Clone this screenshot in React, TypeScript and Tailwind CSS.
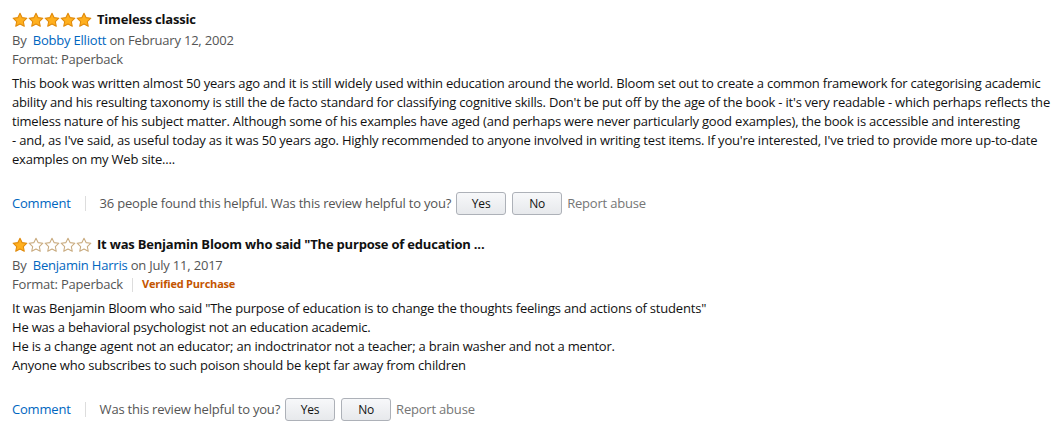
import React from 'react';

type Review = {
  rating: number;
  title: string;
  author: string;
  date: string;
  verified: boolean;
  body: React.ReactNode[];
  helpful?: string;
};

const reviews: Review[] = [
  {
    rating: 5,
    title: 'Timeless classic',
    author: 'Bobby Elliott',
    date: 'February 12, 2002',
    verified: false,
    body: [
      <>
        This book was written almost 50 years ago and it is still widely used within education around the world. Bloom set out to create a common framework for categorising academic ability and his resulting taxonomy is still the de facto standard for classifying cognitive skills. Don't be put off by the age of the book - it's very readable - which perhaps reflects the timeless nature of his subject matter. Although some of his examples have aged (and perhaps were never particularly good examples), the book is accessible and interesting{' '}
        <span className="whitespace-nowrap">- and,</span> as I've said, as useful today as it was 50 years ago. Highly recommended to anyone involved in writing test items. If you're interested, I've tried to provide more up-to-date examples on my Web site....
      </>,
    ],
    helpful: '36 people found this helpful.',
  },
  {
    rating: 1,
    title: 'It was Benjamin Bloom who said "The purpose of education ...',
    author: 'Benjamin Harris',
    date: 'July 11, 2017',
    verified: true,
    body: [
      'It was Benjamin Bloom who said "The purpose of education is to change the thoughts feelings and actions of students"',
      'He was a behavioral psychologist not an education academic.',
      'He is a change agent not an educator; an indoctrinator not a teacher; a brain washer and not a mentor.',
      'Anyone who subscribes to such poison should be kept far away from children',
    ],
  },
];

function Star({ filled }: { filled: boolean }) {
  return (
    <svg width="16" height="16" viewBox="0 0 24 24">
      <path
        d="M12 1.8l3.1 6.6 7.2.9-5.3 5 1.4 7.1L12 17.9l-6.4 3.5L7 14.3l-5.3-5 7.2-.9z"
        fill={filled ? '#ffb01f' : '#ffffff'}
        stroke={filled ? '#e08a0b' : '#c9ab7f'}
        strokeWidth="1.6"
        strokeLinejoin="round"
      />
    </svg>
  );
}

function Stars({ rating }: { rating: number }) {
  return (
    <div className="flex">
      {[1, 2, 3, 4, 5].map((i) => (
        <Star key={i} filled={i <= rating} />
      ))}
    </div>
  );
}

function VoteButton({ label }: { label: string }) {
  return (
    <button className="h-[23px] w-[50px] rounded-[3px] border border-[#adb1b8] bg-gradient-to-b from-[#f7f8fa] to-[#e7e9ec] text-[12px] text-[#111]">
      {label}
    </button>
  );
}

function ReviewItem({ review }: { review: Review }) {
  return (
    <div>
      <div className="flex h-[20px] items-center gap-[5px]">
        <Stars rating={review.rating} />
        <span className="text-[13px] font-bold text-[#111]">{review.title}</span>
      </div>
      <div className="h-[20px] leading-[20px] text-[13px] text-[#555]">
        By <a className="ml-[3px] text-[#0066c0]">{review.author}</a> on {review.date}
      </div>
      <div className="flex h-[19px] items-center text-[13px] text-[#555]">
        <span>Format: Paperback</span>
        {review.verified && (
          <>
            <span className="mx-[9px] h-[14px] w-px bg-[#ddd]" />
            <span className="text-[11px] font-bold text-[#c45500]">Verified Purchase</span>
          </>
        )}
      </div>
      <div className="mt-[5px] text-[13px] leading-[19px] text-[#111]">
        {review.body.map((p, i) => (
          <div key={i}>{p}</div>
        ))}
      </div>
      <div className="mt-[23px] flex h-[23px] items-center text-[13px] text-[#555]">
        <a className="text-[#0066c0]">Comment</a>
        <span className="mx-[14px] h-[15px] w-px bg-[#ddd]" />
        <span>{review.helpful ? `${review.helpful} ` : ''}Was this review helpful to you?</span>
        <span className="ml-[5px] flex gap-[6px]">
          <VoteButton label="Yes" />
          <VoteButton label="No" />
        </span>
        <span className="ml-[5px] text-[#767676]">Report abuse</span>
      </div>
    </div>
  );
}

export default function App() {
  return (
    <div
      className="w-[1062px] h-[425px] bg-white px-[12px] pt-[10px] tracking-[-0.2px]"
      style={{ fontFamily: '"Open Sans", "Noto Sans", Arial, sans-serif' }}
    >
      <div className="flex flex-col gap-[20px]">
        {reviews.map((r, i) => (
          <ReviewItem key={i} review={r} />
        ))}
      </div>
    </div>
  );
}
